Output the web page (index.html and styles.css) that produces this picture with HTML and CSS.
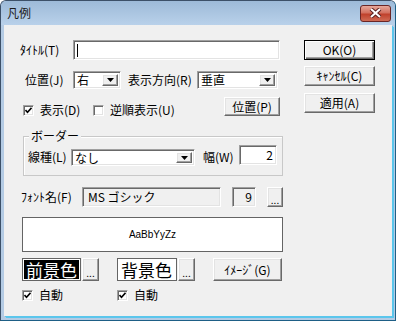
FILE: index.html
```html
<!DOCTYPE html>
<html lang="ja">
<head>
    <meta charset="UTF-8">
    <link rel="stylesheet" href="styles.css">
    <title>凡例</title>
</head>
<body>
    <div class="window">
        <!-- Title bar -->
        <div class="titlebar">
            <span class="title">凡例</span>
            <span class="close">
                <svg width="13" height="10" viewBox="0 0 13 10">
                    <path d="M2 1L11 9M11 1L2 9" stroke="#5b2121" stroke-width="4"/>
                    <path d="M2 1L11 9M11 1L2 9" stroke="#fff" stroke-width="2"/>
                </svg>
            </span>
        </div>

        <div class="client">
            <div class="form">
                <div class="row row-title">
                    <label class="lbl lbl-title">ﾀｲﾄﾙ(T)</label>
                    <div class="edit sunken edit-title"><span class="caret"></span></div>
                </div>

                <div class="row row-pos">
                    <label class="lbl lbl-pos">位置(J)</label>
                    <div class="combo sunken combo-pos">
                        <span class="combo-text">右</span>
                        <span class="drop raised"><svg width="7" height="4"><path d="M0 0h7L3.5 4z"/></svg></span>
                    </div>
                    <label class="lbl lbl-dir">表示方向(R)</label>
                    <div class="combo sunken combo-dir">
                        <span class="combo-text">垂直</span>
                        <span class="drop raised"><svg width="7" height="4"><path d="M0 0h7L3.5 4z"/></svg></span>
                    </div>
                </div>

                <div class="row row-show">
                    <span class="check check-show">
                        <span class="box sunken"><svg width="7" height="7"><path d="M0.5 3l2 2.2L6.5 0.8" fill="none" stroke="#000" stroke-width="1.6"/></svg></span>
                        表示(D)
                    </span>
                    <span class="check check-rev">
                        <span class="box sunken"></span>
                        逆順表示(U)
                    </span>
                    <button class="btn raised btn-place">位置(P)</button>
                </div>

                <!-- Border group -->
                <div class="group">
                    <span class="legend">ボーダー</span>
                    <div class="row row-line">
                        <label class="lbl lbl-line">線種(L)</label>
                        <div class="combo sunken combo-line">
                            <span class="combo-text">なし</span>
                            <span class="drop raised"><svg width="7" height="4"><path d="M0 0h7L3.5 4z"/></svg></span>
                        </div>
                        <label class="lbl lbl-width">幅(W)</label>
                        <div class="edit sunken edit-width">2</div>
                    </div>
                </div>

                <div class="row row-font">
                    <label class="lbl lbl-font">ﾌｫﾝﾄ名(F)</label>
                    <div class="edit sunken readonly edit-font">MS ゴシック</div>
                    <div class="edit sunken readonly edit-size">9</div>
                    <button class="btn raised btn-dots btn-font">...</button>
                </div>

                <div class="sample">AaBbYyZz</div>

                <div class="row row-color">
                    <span class="swatch swatch-fg">前景色</span>
                    <button class="btn raised btn-dots">...</button>
                    <span class="swatch swatch-bg">背景色</span>
                    <button class="btn raised btn-dots">...</button>
                    <button class="btn raised btn-image">ｲﾒｰｼﾞ(G)</button>
                </div>

                <div class="row row-auto">
                    <span class="check check-auto">
                        <span class="box sunken"><svg width="7" height="7"><path d="M0.5 3l2 2.2L6.5 0.8" fill="none" stroke="#000" stroke-width="1.6"/></svg></span>
                        自動
                    </span>
                    <span class="check">
                        <span class="box sunken"><svg width="7" height="7"><path d="M0.5 3l2 2.2L6.5 0.8" fill="none" stroke="#000" stroke-width="1.6"/></svg></span>
                        自動
                    </span>
                </div>
            </div>

            <div class="actions">
                <button class="btn raised btn-default">OK(O)</button>
                <button class="btn raised">ｷｬﾝｾﾙ(C)</button>
                <button class="btn raised btn-apply">適用(A)</button>
            </div>
        </div>
    </div>
</body>
</html>
```

FILE: styles.css
```css
* {
    box-sizing: border-box;
}
body {
    margin: 0;
    font-family: "Noto Sans CJK JP", sans-serif;
    font-size: 12px;
    color: #000;
}
.window {
    width: 396px;
    height: 321px;
    display: flex;
    flex-direction: column;
    background: #b4cbe4;
    border: 1px solid #3c5068;
    border-right-color: #1e5f86;
    border-bottom-color: #1e5f86;
    border-radius: 6px 6px 0 0;
    overflow: hidden;
}
.titlebar {
    height: 24px;
    flex: none;
    display: flex;
    align-items: center;
    padding: 0 4px 0 6px;
    background: linear-gradient(#9dbad8, #b9d1ea);
}
.title {
    flex: 1;
    color: #1b1b1b;
    line-height: 14px;
}
.close {
    width: 31px;
    height: 17px;
    display: flex;
    align-items: center;
    justify-content: center;
    border: 1px solid #6a2626;
    border-radius: 3px;
    background: linear-gradient(#e6a89b, #d3705f 45%, #c0412c 55%, #cf6b55);
}
.client {
    flex: 1;
    display: flex;
    margin: 0 3px 4px;
    background: #f0f0f0;
    box-shadow: 1px 1px #5bc6ec, 2px 2px #5bc6ec;
}
.form {
    width: 280px;
}
.actions {
    display: flex;
    flex-direction: column;
    margin-left: 20px;
    padding-top: 15px;
}

/* 3D borders */
.sunken {
    border: 1px solid;
    border-color: #a0a0a0 #fff #fff #a0a0a0;
    box-shadow: inset 1px 1px #696969, inset -1px -1px #e3e3e3;
    background: #fff;
}
.raised {
    border: 1px solid;
    border-color: #fff #696969 #696969 #fff;
    box-shadow: inset -1px -1px #a0a0a0, inset 1px 1px #e3e3e3;
    background: #f0f0f0;
}

.row {
    display: flex;
    align-items: center;
}
.lbl {
    flex: none;
    line-height: 14px;
    white-space: nowrap;
}
.edit, .combo {
    flex: none;
    display: flex;
    align-items: center;
    height: 20px;
    padding: 0 3px;
    line-height: 14px;
}
.combo {
    padding: 2px 2px 2px 3px;
    height: 18px;
}
.combo-text {
    flex: 1;
}
.drop {
    width: 16px;
    height: 100%;
    display: flex;
    align-items: center;
    justify-content: center;
}
.btn {
    flex: none;
    height: 20px;
    padding: 0;
    font: inherit;
    line-height: 14px;
    color: #000;
}

.row-title {
    margin-top: 15px;
    height: 20px;
}
.lbl-title {
    width: 53px;
    margin-left: 16px;
}
.edit-title {
    width: 207px;
}
.caret {
    width: 1px;
    height: 13px;
    background: #000;
}

.row-pos {
    margin-top: 11px;
    height: 18px;
}
.lbl-pos {
    width: 48px;
    margin-left: 21px;
}
.combo-pos {
    width: 48px;
}
.lbl-dir {
    width: 69px;
    margin-left: 7px;
}
.combo-dir {
    width: 81px;
}

.row-show {
    margin-top: 8px;
    height: 19px;
    align-items: flex-start;
}
.check {
    display: flex;
    align-items: center;
    gap: 6px;
    line-height: 12px;
    white-space: nowrap;
}
.box {
    width: 11px;
    height: 11px;
    display: flex;
    align-items: center;
    justify-content: center;
}
.check-show {
    width: 70px;
    margin: 7px 0 0 19px;
}
.check-rev {
    margin-top: 7px;
}
.btn-place {
    width: 56px;
    height: 19px;
    margin-left: auto;
    margin-right: 4px;
}

.group {
    position: relative;
    width: 260px;
    height: 40px;
    margin: 20px 0 0 19px;
    padding: 8px 0 0 4px;
    border: 1px solid #c8c8c8;
    box-shadow: inset 1px 1px #fff;
}
.legend {
    position: absolute;
    top: -8px;
    left: 5px;
    padding: 0 2px;
    line-height: 14px;
    background: #f0f0f0;
}
.row-line {
    height: 20px;
    align-items: flex-start;
}
.lbl-line {
    width: 43px;
    margin-top: 5px;
}
.combo-line {
    width: 124px;
    height: 17px;
    margin-top: 4px;
}
.lbl-width {
    width: 36px;
    margin: 5px 0 0 8px;
}
.edit-width {
    width: 38px;
    justify-content: flex-end;
}

.row-font {
    margin-top: 11px;
    height: 20px;
}
.lbl-font {
    width: 61px;
    margin-left: 17px;
}
.readonly {
    background: #f0f0f0;
}
.edit-font {
    width: 139px;
    padding-left: 5px;
}
.edit-size {
    width: 24px;
    margin-left: 11px;
    justify-content: flex-end;
}
.btn-dots {
    width: 17px;
    height: 100%;
    font-size: 10px;
    line-height: 1;
    padding-top: 6px;
}
.btn-font {
    width: 16px;
    margin-left: 11px;
}

.sample {
    width: 261px;
    height: 35px;
    margin: 10px 0 0 18px;
    display: flex;
    align-items: center;
    justify-content: center;
    background: #fff;
    border: 1px solid #646464;
    font-family: "Liberation Sans", sans-serif;
    font-size: 10px;
}

.row-color {
    margin-top: 6px;
    height: 23px;
}
.swatch {
    flex: none;
    height: 100%;
    display: flex;
    align-items: center;
    padding-left: 3px;
    border: 1px solid #646464;
    font-size: 17px;
    line-height: 1;
    white-space: nowrap;
    overflow: hidden;
}
.swatch-fg {
    width: 59px;
    margin: 0 1px 0 18px;
    background: #000;
    color: #fff;
    box-shadow: inset 0 0 0 1px #fff;
}
.swatch-bg {
    width: 60px;
    margin: 0 1px 0 18px;
    background: #fff;
}
.btn-image {
    width: 69px;
    height: 100%;
    margin-left: 18px;
}

.row-auto {
    margin-top: 8px;
}
.check-auto {
    width: 95px;
    margin-left: 18px;
}

.btn-default {
    width: 71px;
    border-color: #000;
    box-shadow: inset 1px 1px #fff, inset -1px -1px #696969, inset -2px -2px #a0a0a0;
}
.actions .btn {
    width: 71px;
    margin-bottom: 6px;
}
.actions .btn-apply {
    margin-top: 1px;
}
```
